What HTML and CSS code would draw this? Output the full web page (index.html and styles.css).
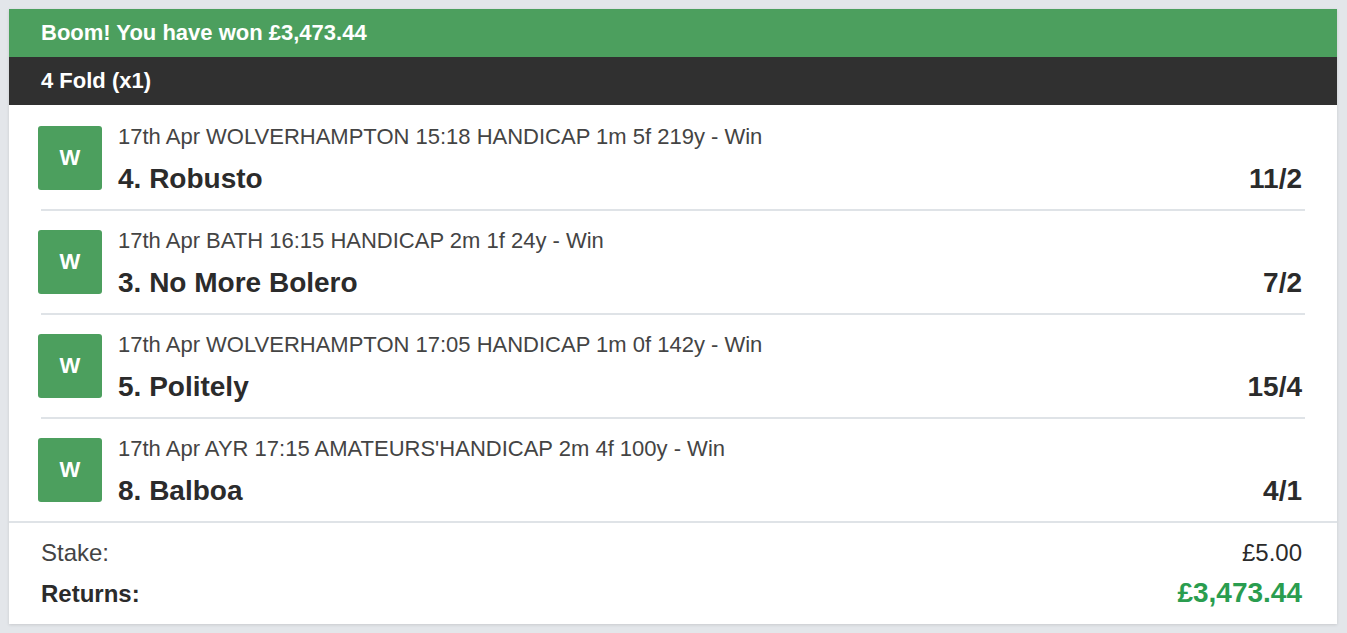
FILE: index.html
```html
<!DOCTYPE html>
<html lang="en">
<head>
<meta charset="utf-8">
<title>Bet receipt</title>
<link rel="stylesheet" href="styles.css">
</head>
<body>
<div class="card">
  <div class="banner">Boom! You have won £3,473.44</div>
  <div class="bet-type">4 Fold (x1)</div>
  <ul class="legs">
    <li class="leg">
      <div class="badge">W</div>
      <div class="leg-body">
        <div class="meta">17th Apr WOLVERHAMPTON 15:18 HANDICAP 1m 5f 219y - Win</div>
        <div class="line"><span class="name">4. Robusto</span><span class="odds">11/2</span></div>
      </div>
    </li>
    <li class="leg">
      <div class="badge">W</div>
      <div class="leg-body">
        <div class="meta">17th Apr BATH 16:15 HANDICAP 2m 1f 24y - Win</div>
        <div class="line"><span class="name">3. No More Bolero</span><span class="odds">7/2</span></div>
      </div>
    </li>
    <li class="leg">
      <div class="badge">W</div>
      <div class="leg-body">
        <div class="meta">17th Apr WOLVERHAMPTON 17:05 HANDICAP 1m 0f 142y - Win</div>
        <div class="line"><span class="name">5. Politely</span><span class="odds">15/4</span></div>
      </div>
    </li>
    <li class="leg">
      <div class="badge">W</div>
      <div class="leg-body">
        <div class="meta">17th Apr AYR 17:15 AMATEURS'HANDICAP 2m 4f 100y - Win</div>
        <div class="line"><span class="name">8. Balboa</span><span class="odds">4/1</span></div>
      </div>
    </li>
  </ul>
  <div class="summary">
    <div class="row stake"><span>Stake:</span><span class="stake-value">£5.00</span></div>
    <div class="row returns"><span>Returns:</span><span class="amount">£3,473.44</span></div>
  </div>
</div>
</body>
</html>
```
FILE: styles.css
```css
html, body {
  margin: 0;
  padding: 0;
}
body {
  background: #e3e6ea;
  font-family: "Liberation Sans", Arial, sans-serif;
  color: #2b2b2b;
  padding: 9px 10px 10px 9px;
}
.card {
  background: #ffffff;
  box-shadow: 0 1px 3px rgba(0, 0, 0, 0.12);
}
.banner {
  background: #4c9f5e;
  color: #ffffff;
  font-weight: bold;
  font-size: 22px;
  height: 48px;
  line-height: 48px;
  padding-left: 32px;
}
.bet-type {
  background: #303030;
  color: #ffffff;
  font-weight: bold;
  font-size: 22px;
  height: 48px;
  line-height: 48px;
  padding-left: 32px;
}
.legs {
  list-style: none;
  margin: 0;
  padding: 2px 32px 0 32px;
}
.leg {
  display: flex;
  align-items: flex-start;
  padding: 19px 0;
  border-bottom: 2px solid #dfe3e7;
}
.leg:last-child {
  border-bottom: none;
}
.badge {
  width: 64px;
  height: 64px;
  margin-left: -3px;
  flex: none;
  background: #4c9f5e;
  border-radius: 3px;
  color: #ffffff;
  font-weight: bold;
  font-size: 22px;
  display: flex;
  align-items: center;
  justify-content: center;
}
.leg-body {
  flex: 1;
  margin-left: 16px;
  padding-top: 1px;
}
.meta {
  font-size: 22px;
  line-height: 20px;
  color: #444444;
}
.line {
  display: flex;
  justify-content: space-between;
  align-items: baseline;
  margin-top: 21px;
}
.name, .odds {
  font-size: 28px;
  font-weight: bold;
  line-height: 22px;
  color: #2b2b2b;
}
.odds {
  margin-right: 3px;
}
.summary {
  border-top: 2px solid #dfe3e7;
  padding: 16px 35px 14px 32px;
}
.row {
  display: flex;
  justify-content: space-between;
  align-items: baseline;
}
.stake {
  font-size: 24px;
  line-height: 28px;
  color: #444444;
}
.stake-value {
  color: #2b2b2b;
}
.returns {
  margin-top: 10px;
  font-size: 24px;
  font-weight: bold;
  line-height: 32px;
  color: #2b2b2b;
}
.amount {
  color: #2a9d4f;
  font-size: 28px;
}
```
